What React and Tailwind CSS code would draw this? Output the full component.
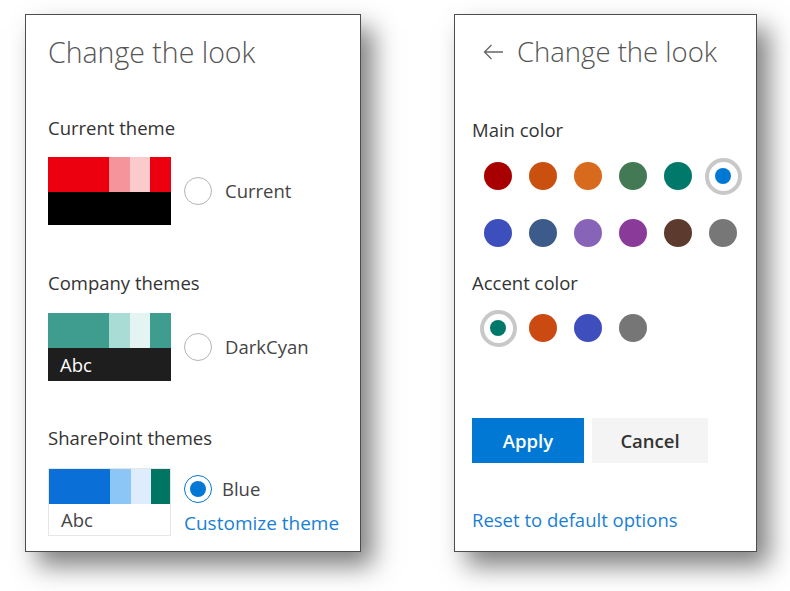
import { useState } from 'react';

const font = { fontFamily: '"Open Sans", "Noto Sans", sans-serif' };

const mainColors = [
  ['#a80000', '#ca5010', '#d86a1e', '#437a55', '#00786a', '#0078d4'],
  ['#3d4fbd', '#3c5a8a', '#8764b8', '#8a3b9a', '#5c3a2e', '#777777'],
];
const accentColors = ['#00786a', '#ca4a12', '#3e4fbd', '#767676'];

function Radio({ checked }) {
  return (
    <span
      className={`flex h-[28px] w-[28px] shrink-0 items-center justify-center rounded-full border bg-white ${
        checked ? 'border-[#0078d4]' : 'border-[#b4b4b4]'
      }`}
    >
      {checked && <span className="h-[16px] w-[16px] rounded-full bg-[#0078d4]" />}
    </span>
  );
}

function Swatch({ colors, bottom, text, textColor, bordered }) {
  return (
    <div className={`flex h-[68px] w-[123px] shrink-0 flex-col ${bordered ? 'border border-[#e6e6e6]' : ''}`}>
      <div className="flex h-[35px]">
        <div className="w-[61px]" style={{ background: colors[0] }} />
        <div className="w-[21px]" style={{ background: colors[1] }} />
        <div className="w-[20px]" style={{ background: colors[2] }} />
        <div className="flex-1" style={{ background: colors[3] }} />
      </div>
      <div className={`flex flex-1 items-center pl-[12px] text-[18.5px] ${textColor}`} style={{ background: bottom }}>
        {text}
      </div>
    </div>
  );
}

function ColorDot({ color, selected, onClick }) {
  return (
    <button onClick={onClick} className="flex h-[40px] w-[40px] items-center justify-center">
      {selected ? (
        <span className="flex h-[37px] w-[37px] items-center justify-center rounded-full border-[4px] border-[#c8c8c8] bg-white">
          <span className="h-[16px] w-[16px] rounded-full" style={{ background: color }} />
        </span>
      ) : (
        <span className="h-[28px] w-[28px] rounded-full" style={{ background: color }} />
      )}
    </button>
  );
}

export default function App() {
  const [main, setMain] = useState('#0078d4');
  const [accent, setAccent] = useState('#00786a');

  return (
    <div className="flex min-h-[591px] w-[790px] gap-[93px] bg-white pl-[25px] pt-[14px] text-[#333]" style={font}>
      {/* left panel */}
      <div className="flex h-[538px] w-[336px] flex-col border border-[#4d4d4d] bg-white pl-[22px] shadow-[12px_14px_24px_rgba(0,0,0,0.5)]">
        <h1 className="mt-[19px] text-[28.5px] font-light leading-[36px] text-[#555]">Change the look</h1>

        <p className="mt-[46px] text-[18.5px] leading-[24px]">Current theme</p>
        <div className="mt-[17px] flex items-center gap-[13px]">
          <Swatch colors={['#ec0010', '#f6949b', '#fbcacd', '#ec0010']} bottom="#000" />
          <Radio />
          <span className="text-[18.5px] text-[#444]">Current</span>
        </div>

        <p className="mt-[46px] text-[18.5px] leading-[24px]">Company themes</p>
        <div className="mt-[18px] flex items-center gap-[13px]">
          <Swatch colors={['#3e9d8e', '#a9dcd5', '#e4f4f2', '#3e9d8e']} bottom="#1e1e1e" text="Abc" textColor="text-white" />
          <Radio />
          <span className="text-[18.5px] text-[#444]">DarkCyan</span>
        </div>

        <p className="mt-[45px] text-[18.5px] leading-[24px]">SharePoint themes</p>
        <div className="mt-[18px] flex gap-[13px]">
          <Swatch colors={['#0a6fd6', '#8cc6f7', '#deedfb', '#007563']} bottom="#fff" text="Abc" textColor="text-[#444]" bordered />
          <div className="flex flex-col">
            <div className="mt-[7px] flex items-center gap-[10px]">
              <Radio checked />
              <span className="text-[18.5px] text-[#444]">Blue</span>
            </div>
            <a className="mt-[8px] text-[19px] leading-[24px] text-[#1a7fd4]">Customize theme</a>
          </div>
        </div>
      </div>

      {/* right panel */}
      <div className="flex h-[538px] w-[303px] flex-col border border-[#4d4d4d] bg-white pl-[17px] shadow-[12px_14px_24px_rgba(0,0,0,0.5)]">
        <h1 className="mt-[19px] flex items-center text-[27.5px] font-light leading-[36px] text-[#555]">
          <svg className="ml-[11px] mr-[13px]" width="21" height="16" viewBox="0 0 21 16" fill="none" stroke="#666" strokeWidth="1.3">
            <path d="M20 8H1.5M8.5 1 1.5 8l7 7" />
          </svg>
          Change the look
        </h1>

        <p className="mt-[48px] text-[18.5px] leading-[24px]">Main color</p>
        <div className="mt-[14px] flex flex-col gap-[17px] pl-[6px]">
          {mainColors.map((row, i) => (
            <div key={i} className="flex gap-[5px]">
              {row.map(c => (
                <ColorDot key={c} color={c} selected={main === c} onClick={() => setMain(c)} />
              ))}
            </div>
          ))}
        </div>

        <p className="mt-[18px] text-[18.5px] leading-[24px]">Accent color</p>
        <div className="mt-[13px] flex gap-[5px] pl-[6px]">
          {accentColors.map(c => (
            <ColorDot key={c} color={c} selected={accent === c} onClick={() => setAccent(c)} />
          ))}
        </div>

        <div className="mt-[70px] flex gap-[8px]">
          <button className="h-[45px] w-[112px] bg-[#0078d4] text-[18.5px] font-semibold text-white">Apply</button>
          <button className="h-[45px] w-[116px] bg-[#f4f4f4] text-[18.5px] font-semibold text-[#333]">Cancel</button>
        </div>

        <a className="mt-[45px] text-[18.5px] leading-[24px] text-[#1a7fd4]">Reset to default options</a>
      </div>
    </div>
  );
}
